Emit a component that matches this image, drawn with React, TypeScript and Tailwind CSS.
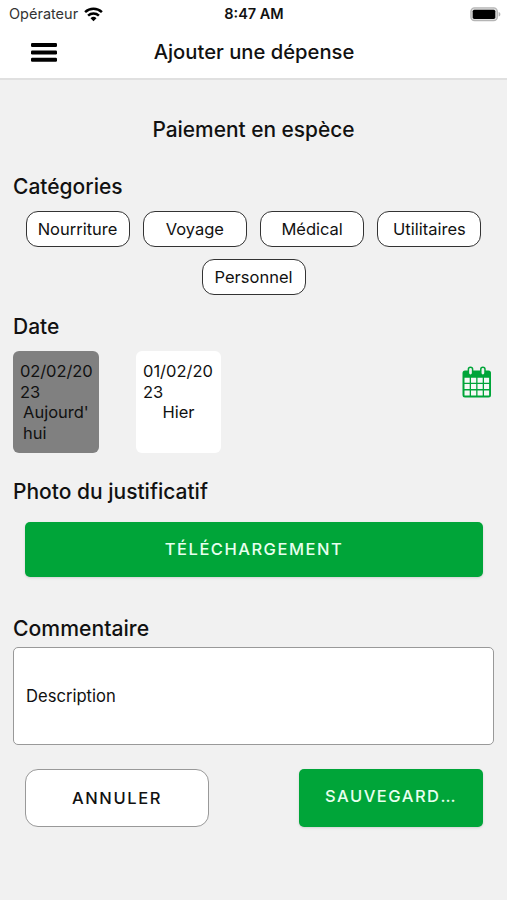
import { useState } from "react";

const categories = ["Nourriture", "Voyage", "Médical", "Utilitaires", "Personnel"];

function WifiIcon() {
  return (
    <svg width="19" height="15" viewBox="0 0 19 15" fill="none" stroke="#000" strokeWidth="2.5">
      <path d="M1.1 5.2a12.2 12.2 0 0 1 16.8 0" />
      <path d="M4.1 8.6a7.9 7.9 0 0 1 10.8 0" />
      <path d="M9.5 14.3 6.5 11.3a4.3 4.3 0 0 1 6 0Z" fill="#000" stroke="none" />
    </svg>
  );
}

function BatteryIcon() {
  return (
    <svg width="31" height="15" viewBox="0 0 31 15">
      <rect x="0.9" y="0.9" width="26.4" height="12.8" rx="3.6" fill="#ddd" stroke="#b5b5b5" strokeWidth="1.3" />
      <rect x="2.7" y="2.7" width="22.6" height="9.2" rx="1.6" fill="#000" />
      <path d="M28.6 5v4.6c1.2-.4 1.8-1.2 1.8-2.3S29.8 5.4 28.6 5Z" fill="#b5b5b5" />
    </svg>
  );
}

function MenuIcon() {
  return (
    <svg width="26" height="19" viewBox="0 0 26 19" fill="#000">
      <rect width="26" height="4" rx="1.2" />
      <rect y="7.4" width="26" height="4" rx="1.2" />
      <rect y="14.8" width="26" height="4" rx="1.2" />
    </svg>
  );
}

function CalendarIcon() {
  return (
    <svg width="30" height="32" viewBox="0 0 30 32">
      <rect x="0.5" y="4.5" width="28.5" height="27" rx="2.5" fill="#00a539" />
      <g fill="#f6f9f6">
        <path d="M2.5 11.7h5.2v5H2.5zM9 11.7h5.2v5H9zM15.500 11.700h5.200v5h-5.200zM22 11.700h5.100v5H22z" />
        <path d="M2.5 18h5.2v5H2.5zM9 18h5.2v5H9zM15.500 18h5.200v5h-5.200zM22 18h5.100v5H22z" />
        <path d="M2.5 24.4h5.2v5H2.5zM9 24.4h5.2v5H9zM15.500 24.400h5.200v5h-5.200zM22 24.400h5.100v5H22z" />
      </g>
      <g fill="#f1f1f1" stroke="#00a539" strokeWidth="1.5">
        <rect x="6.4" y="1.2" width="4.2" height="8" rx="2.1" />
        <rect x="18.8" y="1.2" width="4.2" height="8" rx="2.1" />
      </g>
    </svg>
  );
}

export default function App() {
  const [category, setCategory] = useState("");
  const [day, setDay] = useState("today");

  return (
    <div className="h-[900px] w-[507px] overflow-hidden bg-[#f1f1f1] font-['Inter',sans-serif] text-[#111]">
      <header className="h-20 border-b-2 border-[#e0e0e0] bg-white">
        <div className="grid h-7 grid-cols-3 items-center pr-1.5 pl-[9px]">
          <div className="flex items-center gap-[6px] text-[14.5px] text-[#333]">
            <span>Opérateur</span>
            <WifiIcon />
          </div>
          <span className="-ml-0.5 text-center text-[14.5px] font-semibold">8:47 AM</span>
          <div className="flex justify-end">
            <BatteryIcon />
          </div>
        </div>
        <div className="grid h-12 grid-cols-[123px_1fr_123px] items-center">
          <button aria-label="Menu" className="pl-[31px]">
            <MenuIcon />
          </button>
          <h1 className="pt-px pl-px text-center text-[20.2px] font-medium whitespace-nowrap">Ajouter une dépense</h1>
        </div>
      </header>

      <main className="px-[13px] pt-[35px]">
        <h2 className="text-center text-[20.9px] leading-[30px] font-medium">Paiement en espèce</h2>

        <h3 className="mt-7 text-[21px] leading-7 font-medium">Catégories</h3>
        <div className="mt-[10px] flex flex-wrap justify-center gap-x-[13.3px] gap-y-3">
          {categories.map((name) => (
            <button
              key={name}
              onClick={() => setCategory(name)}
              className={`h-9 w-[104px] rounded-[12px] border text-[16.5px] ${
                category === name ? "border-[#333] bg-[#808080]" : "border-[#333] bg-white"
              }`}
            >
              {name}
            </button>
          ))}
        </div>

        <h3 className="mt-[18px] text-[21px] leading-7 font-medium">Date</h3>
        <div className="mt-[10px] flex h-[102px]">
          <button
            onClick={() => setDay("today")}
            className={`flex w-[86px] flex-col items-center rounded-[6px] px-[7px] pt-[10px] text-left text-[16.5px] leading-[20.7px] ${
              day === "today" ? "bg-[#808080]" : "bg-white"
            }`}
          >
            <span className="w-full whitespace-nowrap tracking-[-0.1px]">
              02/02/20
              <br />
              23
            </span>
            <span className="w-[66px] whitespace-nowrap">
              Aujourd'
              <br />
              hui
            </span>
          </button>
          <button
            onClick={() => setDay("yesterday")}
            className={`ml-[37px] flex w-[85px] flex-col items-center rounded-[6px] px-[7px] pt-[10px] text-left text-[16.5px] leading-[20.7px] ${
              day === "yesterday" ? "bg-[#808080]" : "bg-white"
            }`}
          >
            <span className="w-full whitespace-nowrap">
              01/02/20
              <br />
              23
            </span>
            <span>Hier</span>
          </button>
          <button aria-label="Calendrier" className="mt-[15px] mr-[2px] ml-auto self-start">
            <CalendarIcon />
          </button>
        </div>

        <h3 className="mt-[25px] text-[21px] leading-7 font-medium">Photo du justificatif</h3>
        <button className="mx-3 mt-4 block h-[55px] w-[458px] rounded-[5px] bg-[#00a539] text-[16.5px] font-medium tracking-[1.5px] text-[#e8ffef] shadow">
          TÉLÉCHARGEMENT
        </button>

        <h3 className="mt-[37px] text-[21.2px] leading-7 font-medium">Commentaire</h3>
        <div className="mt-[5px] flex h-[98px] items-center rounded-[5px] border border-[#999] bg-white px-3">
          <span className="text-[16.6px]">Description</span>
        </div>

        <div className="mx-3 mt-6 flex justify-between">
          <button className="h-[58px] w-[184px] rounded-[13px] border border-[#999] bg-white text-[16.5px] font-medium tracking-[1.6px]">
            ANNULER
          </button>
          <button className="-mr-px h-[58px] w-[184px] truncate rounded-[5px] bg-[#00a539] pr-6 pb-1 pl-[26px] text-left text-[16.5px] font-medium tracking-[1.5px] text-[#e8ffef] shadow">
            SAUVEGARDER
          </button>
        </div>
      </main>
    </div>
  );
}
